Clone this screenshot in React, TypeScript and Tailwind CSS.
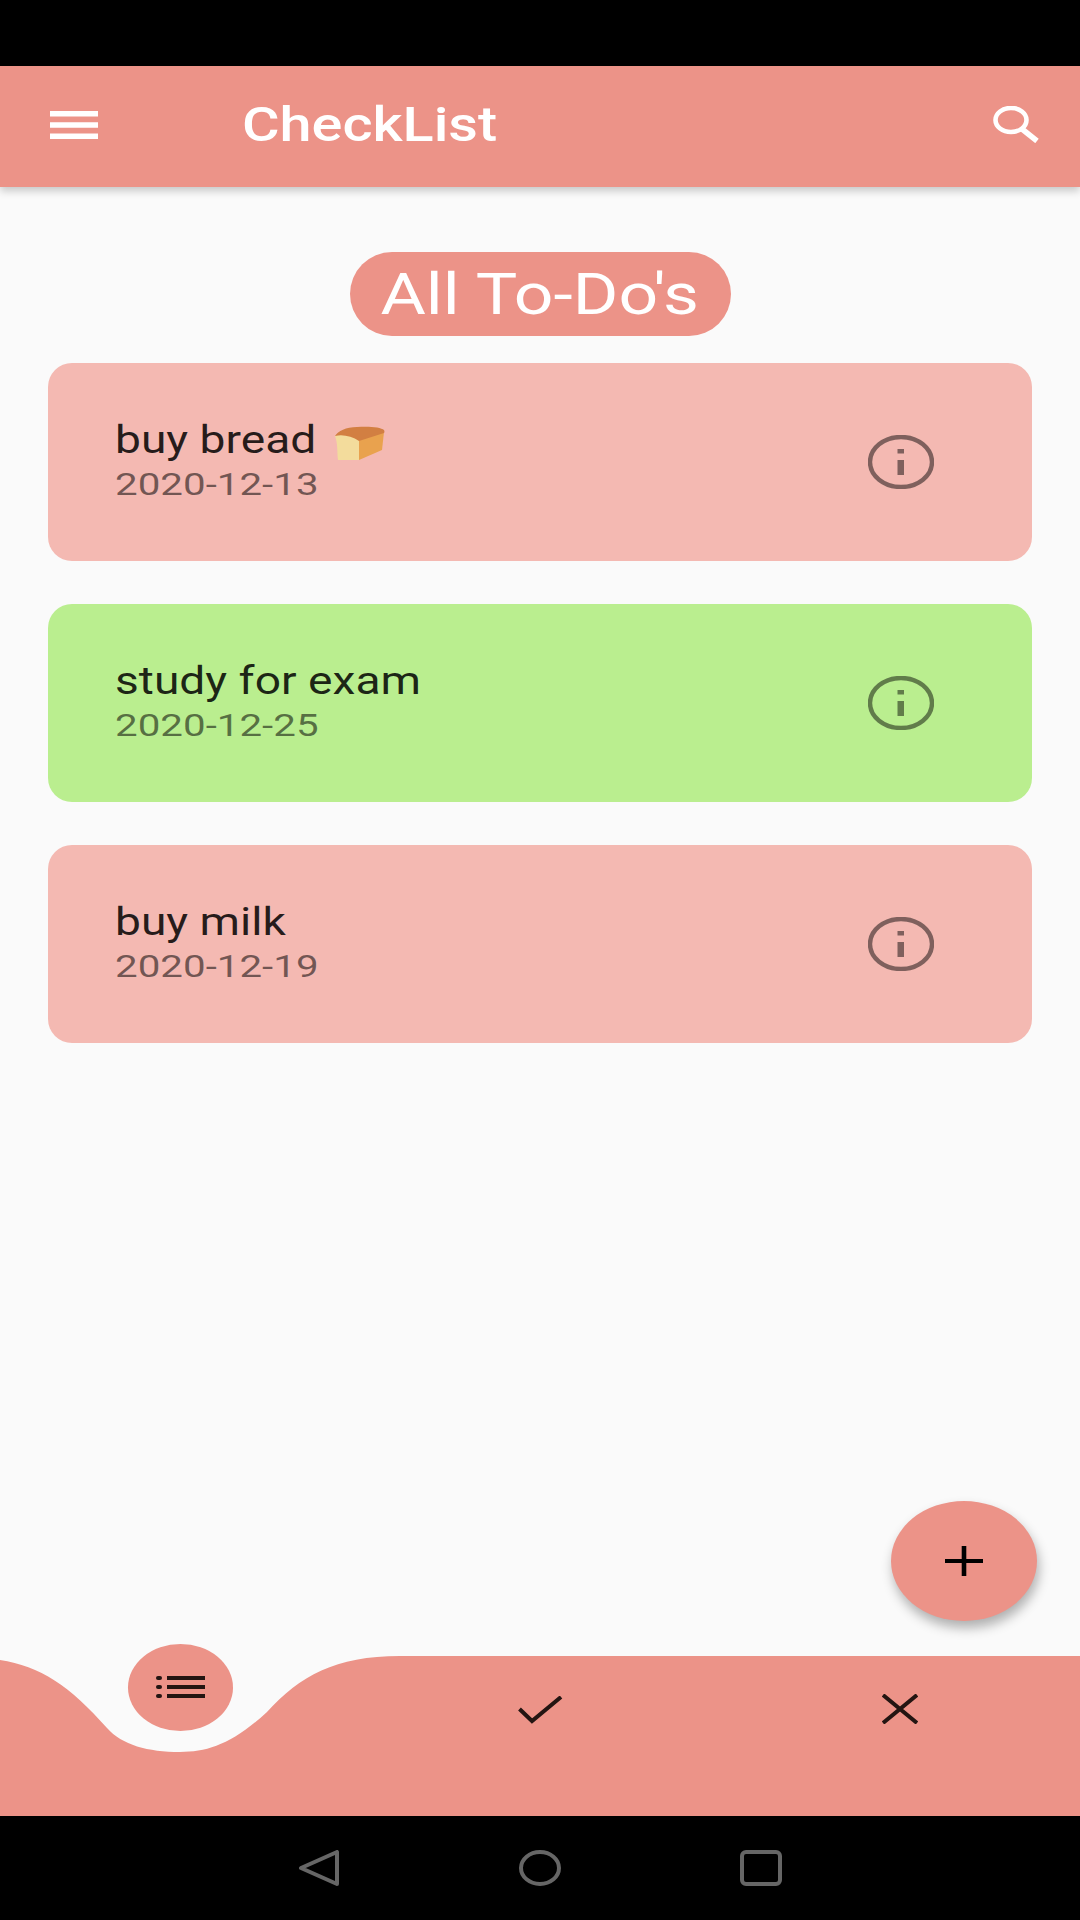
import React from "react";

const font = { fontFamily: "Roboto, sans-serif" };

function Info() {
  return (
    <svg width="66" height="54" viewBox="0 0 66 54" className="shrink-0" aria-hidden>
      <ellipse cx="33" cy="27" rx="31" ry="25" fill="none" stroke="#000" strokeOpacity="0.48" strokeWidth="4.4" />
      <rect x="29.5" y="25" width="6.5" height="15" fill="#000" fillOpacity="0.48" />
      <rect x="29.5" y="14" width="6.5" height="4.5" fill="#000" fillOpacity="0.48" />
    </svg>
  );
}

function Bread() {
  return (
    <svg width="52" height="35" viewBox="0 0 52 35" className="shrink-0" aria-hidden>
      <path d="M25 13 L50 6 L48 24 L25 34 Z" fill="#e9a24e" />
      <path d="M1 10 C6 8 18 9 25 13 L25 34 L4 34 C3 26 4 18 1 10 Z" fill="#f3dc9c" />
      <path d="M1 10 C4 5 12 1 23 1 C34 0 47 1 50 4 C51 6 50 7 50 7 L25 15 C18 10 8 8 1 10 Z" fill="#d27f42" />
    </svg>
  );
}

function Card({ title, date, green, bread }: { title: string; date: string; green?: boolean; bread?: boolean }) {
  return (
    <div className={`flex h-[198px] items-center justify-between rounded-[24px] pl-[67px] pr-[98px] ${green ? "bg-[#baee8f]" : "bg-[#f4b9b2]"}`}>
      <div className="flex flex-col">
        <div className="flex h-[44px] items-center">
          <span className="-mt-[6px] origin-left scale-x-[1.214] whitespace-nowrap text-[38px] leading-[44px] text-[#000000d9]">{title}</span>
          {bread && (
            <span className="ml-[18px] translate-x-[35px]">
              <Bread />
            </span>
          )}
        </div>
        <span className="origin-left scale-x-[1.26] whitespace-nowrap text-[32px] leading-[38px] text-[#0000008a]">{date}</span>
      </div>
      <Info />
    </div>
  );
}

export default function App() {
  return (
    <div className="flex h-[1920px] w-[1080px] flex-col overflow-hidden bg-[#fafafa]" style={font}>
      <div className="h-[66px] bg-black" />

      <header className="relative z-10 flex h-[121px] items-center bg-[#ec9388] pb-[4px] pl-[50px] pr-[41px] shadow-[0_4px_8px_rgba(0,0,0,0.2)]">
        <svg width="48" height="28" viewBox="0 0 48 28" fill="#fff" aria-hidden>
          <rect x="0" y="0" width="48" height="5.5" />
          <rect x="0" y="11.25" width="48" height="5.5" />
          <rect x="0" y="22.5" width="48" height="5.5" />
        </svg>
        <span className="ml-[144px] origin-left scale-x-[1.2] whitespace-nowrap text-[48px] font-medium leading-none text-white">CheckList</span>
        <svg width="46" height="37" viewBox="0 0 46 37" fill="none" stroke="#fff" strokeWidth="4.6" className="ml-auto" aria-hidden>
          <ellipse cx="18" cy="14" rx="15.5" ry="12" />
          <path d="M29 23 L44 35" strokeWidth="5.5" />
        </svg>
      </header>

      <main className="relative flex flex-1 flex-col px-[48px] pt-[65px]">
        <div className="flex justify-center">
          <div className="flex h-[84px] w-[381px] items-center justify-center rounded-full bg-[#ec9388]">
            <span className="scale-x-[1.2] whitespace-nowrap text-[58px] leading-none text-white">All To-Do's</span>
          </div>
        </div>
        <div className="mt-[27px] flex flex-col gap-[43px]">
          <Card title="buy bread" date="2020-12-13" bread />
          <Card title="study for exam" date="2020-12-25" green />
          <Card title="buy milk" date="2020-12-19" />
        </div>

        <div className="absolute bottom-[23px] right-[43px] flex h-[120px] w-[146px] items-center justify-center rounded-[50%] bg-[#ec9388] shadow-[2px_7px_12px_rgba(0,0,0,0.3)]">
          <svg width="38" height="30" viewBox="0 0 38 30" stroke="#000" strokeWidth="4" aria-hidden>
            <path d="M0 15 H38" />
            <path d="M19 0 V30" strokeWidth="4.6" />
          </svg>
        </div>
      </main>

      <nav className="relative h-[172px]">
        <svg className="absolute inset-0" width="1080" height="172" viewBox="0 0 1080 172" aria-hidden>
          <path
            d="M0 16 C40 22 70 42 107 84 C122 101 148 108 180 108 C208 108 232 100 267 68 C300 32 335 12 400 12 L1080 12 L1080 172 L0 172 Z"
            fill="#ec9388"
          />
        </svg>
        <div className="relative grid h-full grid-cols-3">
          <div className="flex justify-center">
            <div className="flex h-[87px] w-[105px] items-center justify-center rounded-[50%] bg-[#ec9388]">
              <svg width="49" height="23" viewBox="0 0 49 23" fill="#241512" aria-hidden>
                <rect x="0" y="0" width="6" height="4" rx="2" />
                <rect x="0" y="9" width="6" height="4" rx="2" />
                <rect x="0" y="18" width="6" height="4" rx="2" />
                <rect x="11" y="0" width="38" height="4" />
                <rect x="11" y="9" width="38" height="4" />
                <rect x="11" y="18" width="38" height="4" />
              </svg>
            </div>
          </div>
          <div className="flex justify-center pt-[52px]">
            <svg width="45" height="28" viewBox="0 0 45 28" fill="none" stroke="#241512" strokeWidth="4" aria-hidden>
              <path d="M1.5 13 L14 25 L43 1" />
            </svg>
          </div>
          <div className="flex justify-center pt-[50px]">
            <svg width="36" height="30" viewBox="0 0 36 30" fill="none" stroke="#241512" strokeWidth="4" aria-hidden>
              <path d="M1 1 L35 29 M35 1 L1 29" />
            </svg>
          </div>
        </div>
      </nav>

      <div className="flex h-[104px] items-center justify-center gap-[179px] bg-black">
        <svg width="42" height="36" viewBox="0 0 42 36" fill="none" stroke="#666" strokeWidth="4" strokeLinejoin="round" aria-hidden>
          <path d="M3 18 L39 2 L39 34 Z" />
        </svg>
        <svg width="42" height="36" viewBox="0 0 42 36" fill="none" stroke="#666" strokeWidth="4" aria-hidden>
          <ellipse cx="21" cy="18" rx="19" ry="16" />
        </svg>
        <svg width="42" height="36" viewBox="0 0 42 36" fill="none" stroke="#666" strokeWidth="4" aria-hidden>
          <rect x="2" y="2" width="38" height="32" rx="4" />
        </svg>
      </div>
    </div>
  );
}
